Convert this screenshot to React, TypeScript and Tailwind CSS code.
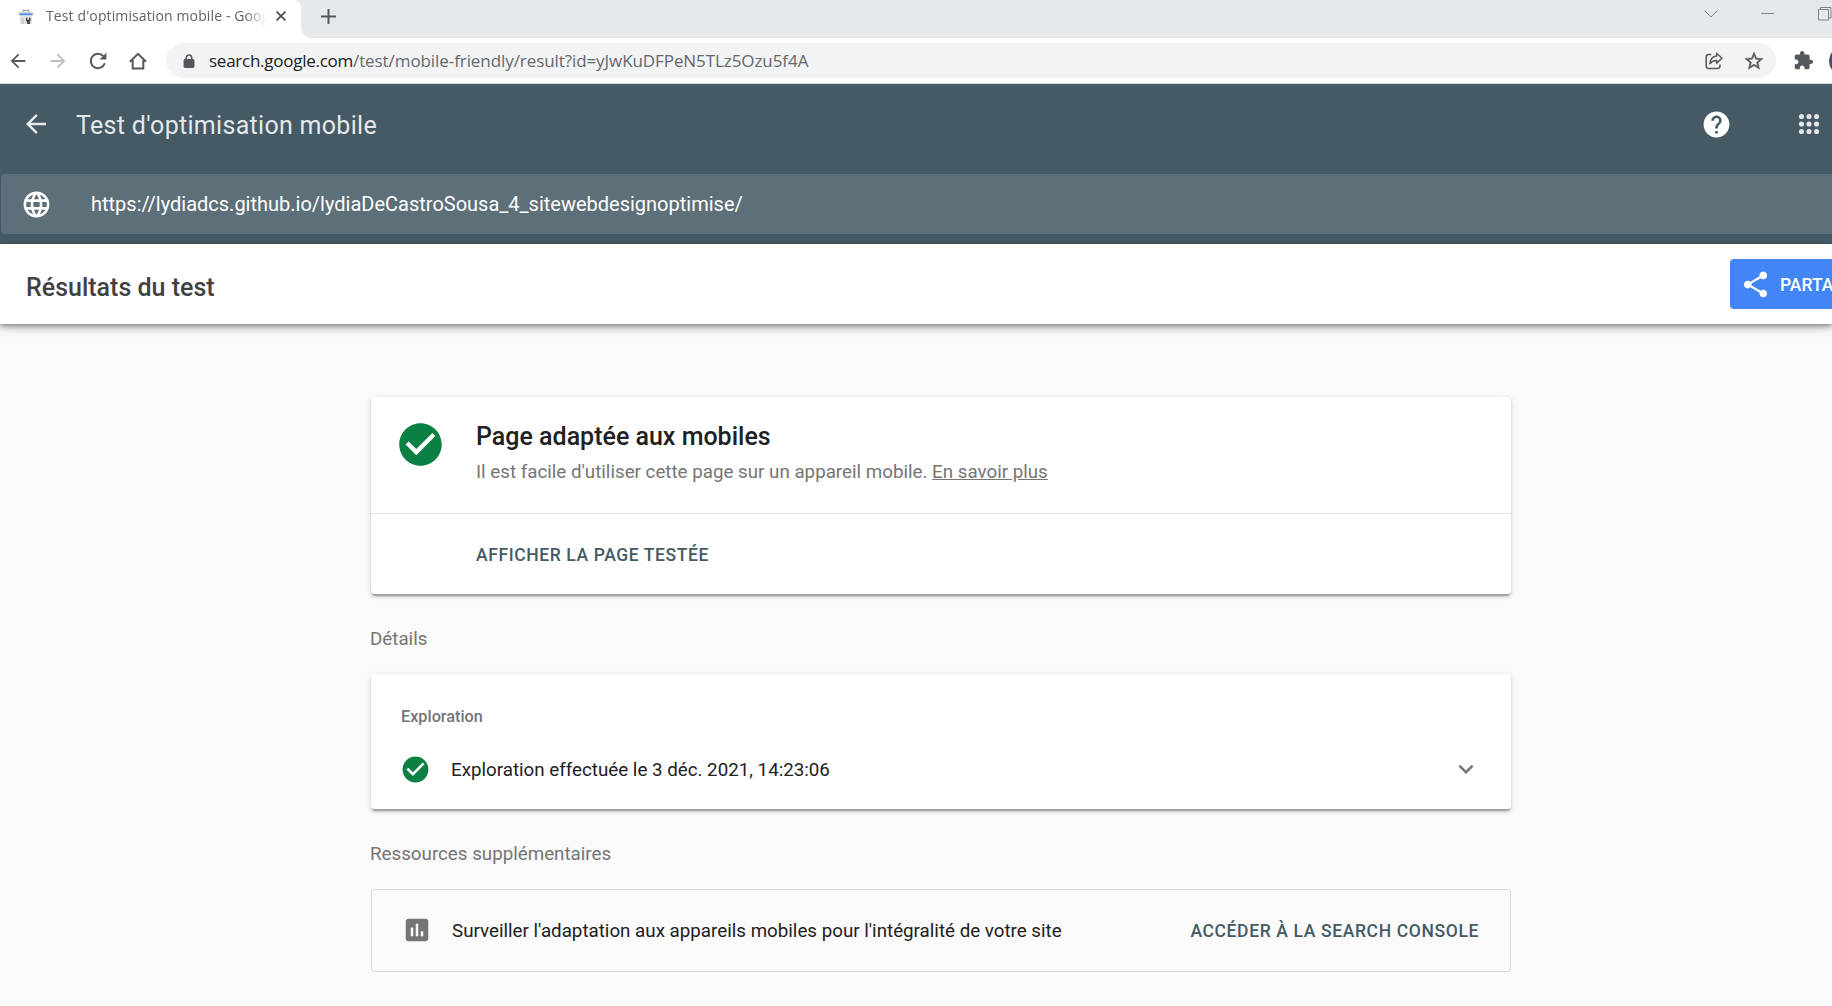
import type { ReactNode } from "react";

function Icon({ d, className, children }: { d?: string; className: string; children?: ReactNode }) {
  return (
    <svg viewBox="0 0 24 24" fill="currentColor" className={`block shrink-0 ${className}`} aria-hidden="true">
      {d && <path d={d} />}
      {children}
    </svg>
  );
}

const PATHS = {
  arrowBack: "M20 11H7.83l5.59-5.59L12 4l-8 8 8 8 1.41-1.41L7.83 13H20v-2z",
  arrowForward: "M4 11h12.17l-5.59-5.59L12 4l8 8-8 8-1.41-1.41L16.17 13H4v-2z",
  star: "M22 9.24l-7.19-.62L12 2 9.19 8.63 2 9.24l5.46 4.73L5.82 21 12 17.27 18.18 21l-1.63-7.03L22 9.24zM12 15.4l-3.76 2.27 1-4.28-3.32-2.88 4.38-.38L12 6.1l1.71 4.04 4.38.38-3.32 2.88 1 4.28L12 15.4z",
  extension:
    "M20.5 11H19V7c0-1.1-.9-2-2-2h-4V3.5C13 2.12 11.88 1 10.5 1S8 2.12 8 3.5V5H4c-1.1 0-1.99.9-1.99 2v3.8H3.5c1.49 0 2.7 1.21 2.7 2.7s-1.21 2.7-2.7 2.7H2V20c0 1.1.9 2 2 2h3.8v-1.5c0-1.49 1.21-2.7 2.7-2.7 1.49 0 2.7 1.21 2.7 2.7V22H17c1.1 0 2-.9 2-2v-4h1.5c1.38 0 2.5-1.12 2.5-2.5S21.88 11 20.5 11z",
  language:
    "M11.99 2C6.47 2 2 6.48 2 12s4.47 10 9.99 10C17.52 22 22 17.52 22 12S17.52 2 11.99 2zm6.93 6h-2.95c-.32-1.25-.78-2.45-1.38-3.56 1.84.63 3.37 1.91 4.33 3.56zM12 4.04c.83 1.2 1.48 2.53 1.91 3.96h-3.82c.43-1.43 1.08-2.76 1.91-3.96zM4.26 14C4.1 13.36 4 12.69 4 12s.1-1.36.26-2h3.38c-.08.66-.14 1.32-.14 2 0 .68.06 1.34.14 2H4.26zm.82 2h2.95c.32 1.25.78 2.45 1.38 3.56-1.84-.63-3.37-1.9-4.33-3.56zm2.95-8H5.08c.96-1.66 2.49-2.93 4.33-3.56C8.81 5.55 8.35 6.75 8.03 8zM12 19.96c-.83-1.2-1.48-2.53-1.91-3.96h3.82c-.43 1.43-1.08 2.76-1.91 3.96zM14.34 14H9.66c-.09-.66-.16-1.32-.16-2 0-.68.07-1.35.16-2h4.68c.09.65.16 1.32.16 2 0 .68-.07 1.34-.16 2zm.25 5.56c.6-1.11 1.06-2.31 1.38-3.56h2.95c-.96 1.65-2.49 2.93-4.33 3.56zM16.36 14c.08-.66.14-1.32.14-2 0-.68-.06-1.34-.14-2h3.38c.16.64.26 1.31.26 2s-.1 1.36-.26 2h-3.38z",
  help: "M12 2C6.48 2 2 6.48 2 12s4.48 10 10 10 10-4.48 10-10S17.52 2 12 2zm1 17h-2v-2h2v2zm2.07-7.75l-.9.92C13.45 12.9 13 13.5 13 15h-2v-.5c0-1.1.45-2.1 1.17-2.83l1.24-1.26c.37-.36.59-.86.59-1.41 0-1.1-.9-2-2-2s-2 .9-2 2H8c0-2.21 1.79-4 4-4s4 1.79 4 4c0 .88-.36 1.68-.93 2.25z",
  share:
    "M18 16.08c-.76 0-1.44.3-1.96.77L8.91 12.7c.05-.23.09-.46.09-.7s-.04-.47-.09-.7l7.05-4.11c.54.5 1.25.81 2.04.81 1.66 0 3-1.34 3-3s-1.34-3-3-3-3 1.34-3 3c0 .24.04.47.09.7L8.04 9.81C7.5 9.31 6.79 9 6 9c-1.66 0-3 1.34-3 3s1.34 3 3 3c.79 0 1.5-.31 2.04-.81l7.12 4.16c-.05.21-.08.43-.08.65 0 1.61 1.31 2.92 2.92 2.92 1.61 0 2.92-1.31 2.92-2.92s-1.31-2.92-2.92-2.92z",
  checkCircle: "M12 2C6.48 2 2 6.48 2 12s4.48 10 10 10 10-4.48 10-10S17.52 2 12 2zm-2 15l-5-5 1.41-1.41L10 14.17l7.59-7.59L19 8l-9 9z",
  expandMore: "M16.59 8.59L12 13.17 7.41 8.59 6 10l6 6 6-6z",
  assessment:
    "M19 3H5c-1.1 0-2 .9-2 2v14c0 1.1.9 2 2 2h14c1.1 0 2-.9 2-2V5c0-1.1-.9-2-2-2zM9 17H7v-7h2v7zm4 0h-2V7h2v10zm4 0h-2v-4h2v4z",
};

const DOTS = [6, 12, 18];

function TabStrip() {
  return (
    <div className="flex h-[38px] bg-[#e5e9ec] text-[#5f6368]">
      <div className="flex w-[301px] shrink-0 items-start rounded-tr-lg bg-white pl-[18px] pt-[5px]">
        <div className="flex h-[22px] items-center">
          <svg viewBox="0 0 16 16" className="mt-[2px] block size-4" aria-hidden="true">
            <path d="M5.2 3V1.2h5.6V3" fill="none" stroke="#8a8a8a" strokeWidth="1.1" />
            <path d="M0.8 4.2Q.8 2.800 2.200 2.800h11.600q1.400 0 1.400 1.400v2H.8z" fill="#d5d5d5" />
            <path d="M1.500 4.500h13v1.900h-13z" fill="#4285f4" />
            <path d="M2 6.400h12V15H2z" fill="#e2e2e2" />
            <path d="M3.500 9h2.500v6H3.500z" fill="#cfcfcf" />
            <path d="M8 9.200l1.300-.9v2.400h1.700V8.300c1.900.8 2.300 3 .9 4.300V15H9.200v-2.100C8 12.100 7.600 10.600 8 9.200z" fill="#424242" />
          </svg>
        </div>
        <div className="ml-3 h-[22px] w-[220px] overflow-hidden whitespace-nowrap font-['Open_Sans',sans-serif] text-[14px] leading-[21px] tracking-[0.12px] [mask-image:linear-gradient(to_right,black_200px,transparent_220px)]">
          Test d'optimisation mobile - Google Search Console
        </div>
        <svg viewBox="0 0 10 10" className="ml-[10px] mt-[6px] block size-[10px] shrink-0" aria-hidden="true">
          <path d="M.6.600l8.800 8.800M9.400.600L.6 9.400" stroke="#4a4d51" strokeWidth="1.8" />
        </svg>
      </div>
      <div className="size-[10px] shrink-0 self-end bg-[radial-gradient(circle_at_top_right,#e5e9ec_9.5px,white_10px)]" />
      <svg viewBox="0 0 15 15" className="ml-[10px] mt-[9px] block size-[15px] shrink-0" aria-hidden="true">
        <path d="M7.500 0v15M0 7.500h15" stroke="#55585c" strokeWidth="2" />
      </svg>
      <div className="ml-auto flex shrink-0 text-[#7e8387]">
        <svg viewBox="0 0 14 8" className="mt-[9.500px] block h-2 w-[14px]" fill="none" stroke="currentColor" aria-hidden="true">
          <path d="M.5.5L7 7 13.500.5" />
        </svg>
        <div className="ml-[43px] mt-[13px] h-px w-[13px] bg-[#7e8387]" />
        <svg viewBox="0 0 14 14" className="ml-11 mt-[7px] block size-[14px]" fill="none" stroke="currentColor" aria-hidden="true">
          <path d="M.5 2.500h10v10.500H.5zM2.500 2.500V.5h10.500v10.500h-2.500" />
        </svg>
      </div>
    </div>
  );
}

function Toolbar() {
  return (
    <div className="flex h-[46px] items-center border-b border-[#d5d9dc] bg-white pl-[7px] text-[#55585d]">
      <Icon d={PATHS.arrowBack} className="size-[22px]" />
      <Icon d={PATHS.arrowForward} className="ml-[18px] size-[22px] text-[#babcbe]" />
      <svg viewBox="0 0 18 18" className="ml-5 block size-[18px] shrink-0" fill="none" aria-hidden="true">
        <path d="M15.800 11.200A7.200 7.200 0 1 1 14.300 4.100" stroke="currentColor" strokeWidth="2" />
        <path d="M17.400.700v6.900h-6.900z" fill="currentColor" />
      </svg>
      <svg viewBox="0 0 18 18" className="ml-[22px] block size-[18px] shrink-0" fill="none" stroke="currentColor" strokeWidth="2" aria-hidden="true">
        <path d="M.9 9.700L9 1.800l8.100 7.900M3.700 8v8.500h10.600V8" />
      </svg>
      <div className="ml-[19px] flex h-[35px] w-[1610px] shrink-0 items-center rounded-full bg-[#f1f3f4] pl-4 pr-[11px]">
        <svg viewBox="0 0 12 14" className="ml-[0.500px] block h-[14px] w-3" aria-hidden="true">
          <path d="M3.300 6V3.700a2.700 2.700 0 0 1 5.400 0V6" fill="none" stroke="currentColor" strokeWidth="1.600" />
          <rect x=".6" y="5" width="10.800" height="9" rx="1.400" fill="currentColor" />
        </svg>
        <div className="ml-[14.500px] whitespace-nowrap font-['Open_Sans',sans-serif] text-[17px] leading-6">
          <span className="tracking-[-0.260px] text-[#202124]">search.google.com</span>
          <span className="tracking-[-0.080px] text-[#65696e]">/test/mobile-friendly/result?id=yJwKuDFPeN5TLz5Ozu5f4A</span>
        </div>
        <svg viewBox="0 0 18 18" className="ml-auto block size-[18px] shrink-0" fill="none" stroke="currentColor" aria-hidden="true">
          <path d="M6.300 2.600H3.600Q1.200 2.600 1.200 5v9q0 2.400 2.400 2.400h9q2.400 0 2.400-2.400v-1.600" strokeWidth="1.500" />
          <path d="M11.600 1.300L17 6.200l-5.400 4.900V8.400C8.600 8.300 6.700 9.300 4.900 11.700 5.300 8 7.300 4.600 11.600 4.100z" strokeWidth="1.500" strokeLinejoin="round" />
        </svg>
        <Icon d={PATHS.star} className="ml-5 size-[22px] stroke-current [stroke-width:0.4]" />
      </div>
      <Icon d={PATHS.extension} className="ml-[17px] size-[21px]" />
      <div className="ml-[15px] size-[30px] shrink-0 rounded-full bg-[#4b4d6b]" />
    </div>
  );
}

function AppHeader() {
  return (
    <header className="h-40 bg-[#455a64] text-white">
      <div className="flex h-[90px] items-start pl-[21px] pt-[25px]">
        <Icon d={PATHS.arrowBack} className="size-[30px] text-[#e4e8ea]" />
        <h1 className="ml-[25px] mt-px text-[25px] leading-[31px] tracking-[0.300px] text-[#e4e8ea]">Test d'optimisation mobile</h1>
        <Icon d={PATHS.help} className="ml-auto mr-[62.500px] mt-[-0.500px] size-[31px]" />
        <Icon className="mr-2 size-[30px] text-[#e4e8ea]">
          {DOTS.map((y) => DOTS.map((x) => <circle key={`${x}-${y}`} cx={x} cy={y} r="2.050" />))}
        </Icon>
      </div>
      <div className="ml-px flex h-[60px] items-center rounded-l bg-[#5d6f78] pl-[19.500px]">
        <Icon d={PATHS.language} className="size-[31px]" />
        <span className="ml-[39.500px] text-xl">https://lydiadcs.github.io/lydiaDeCastroSousa_4_sitewebdesignoptimise/</span>
      </div>
    </header>
  );
}

const CARD =
  "rounded-[4px] bg-white shadow-[0_3.75px_1.25px_-2.500px_rgba(0,0,0,0.2),0_2.500px_2.500px_rgba(0,0,0,0.14),0_1.25px_6.25px_rgba(0,0,0,0.12)]";

export default function App() {
  return (
    <div className="h-[1006px] w-full overflow-hidden bg-[#fafafa] font-['Roboto',sans-serif] text-[18.750px] leading-6 text-[#212121]">
      <TabStrip />
      <Toolbar />
      <AppHeader />
      <div className="flex h-20 items-center bg-white pl-[26px] shadow-[0_2px_5px_rgba(0,0,0,0.35),0_4px_10px_rgba(0,0,0,0.2)]">
        <h2 className="pt-2 text-[25px] font-medium leading-8 text-[#424242]">Résultats du test</h2>
        <button className="ml-auto flex h-[50px] w-[102px] items-center overflow-hidden whitespace-nowrap rounded-l-[4px] bg-[#4285f4] pl-[10px] text-[17.500px] font-medium text-white">
          <Icon d={PATHS.share} className="mr-[9px] size-[31px]" />
          <span className="pt-[2px]">PARTAGER</span>
        </button>
      </div>

      <main className="ml-[371px] w-[1140px] pt-[73px]">
        <section className={CARD}>
          <div className="flex h-[117px] border-b border-[#e0e0e0] pl-6 pt-[22px]">
            <Icon d={PATHS.checkCircle} className="mt-[-0.500px] size-[51px] text-[#0b8043]" />
            <div className="ml-[30px]">
              <h3 className="mt-[2px] text-[25px] font-medium leading-8">Page adaptée aux mobiles</h3>
              <p className="mt-[7px] text-[#757575]">
                Il est facile d'utiliser cette page sur un appareil mobile. <a className="underline">En savoir plus</a>
              </p>
            </div>
          </div>
          <div className="flex h-20 items-center pl-[105px] pt-[2px] text-[17.500px] font-medium tracking-[0.600px] text-[#455a64]">AFFICHER LA PAGE TESTÉE</div>
        </section>

        <h4 className="-ml-px mt-[33px] text-[#757575]">Détails</h4>
        <section className={`mt-[23px] h-[135px] pl-[30px] pt-[31px] ${CARD}`}>
          <div className="text-[16.250px] font-medium text-[#757575]">Exploration</div>
          <div className="-ml-px mt-[25px] flex h-[30px] items-center">
            <Icon d={PATHS.checkCircle} className="size-[31px] text-[#0b8043]" />
            <span className="ml-5 pt-px">Exploration effectuée le 3 déc. 2021, 14:23:06</span>
            <Icon d={PATHS.expandMore} className="ml-auto mr-[30px] size-[30px] text-[#757575]" />
          </div>
        </section>

        <h4 className="-ml-px mt-[33px] text-[#757575]">Ressources supplémentaires</h4>
        <section className="mt-[23px] flex h-[83px] items-center rounded-[3px] border border-[#dcdcdc] pl-[30px] pr-[31px]">
          <Icon d={PATHS.assessment} className="-mt-px size-[30px] text-[#757575]" />
          <span className="ml-5">Surveiller l'adaptation aux appareils mobiles pour l'intégralité de votre site</span>
          <span className="ml-auto text-[17.500px] font-medium tracking-[0.630px] text-[#455a64]">ACCÉDER À LA SEARCH CONSOLE</span>
        </section>
      </main>
    </div>
  );
}
